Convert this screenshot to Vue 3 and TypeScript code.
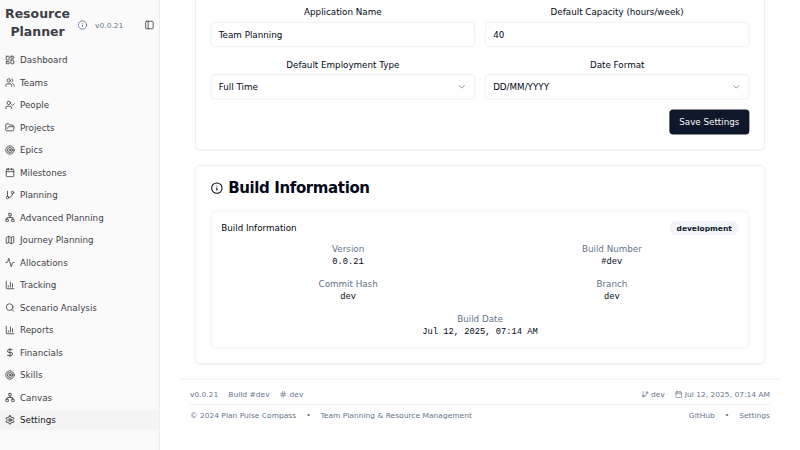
<script setup lang="ts">
import { defineComponent, h } from 'vue'

const icons: Record<string, string> = {
  dashboard: '<rect width="7" height="9" x="3" y="3" rx="1"/><rect width="7" height="5" x="14" y="3" rx="1"/><rect width="7" height="9" x="14" y="12" rx="1"/><rect width="7" height="5" x="3" y="16" rx="1"/>',
  users: '<path d="M16 21v-2a4 4 0 0 0-4-4H6a4 4 0 0 0-4 4v2"/><circle cx="9" cy="7" r="4"/><path d="M22 21v-2a4 4 0 0 0-3-3.87"/><path d="M16 3.13a4 4 0 0 1 0 7.75"/>',
  userCheck: '<path d="M16 21v-2a4 4 0 0 0-4-4H6a4 4 0 0 0-4 4v2"/><circle cx="9" cy="7" r="4"/><polyline points="16 11 18 13 22 9"/>',
  folder: '<path d="m6 14 1.5-2.9A2 2 0 0 1 9.24 10H20a2 2 0 0 1 1.94 2.5l-1.54 6a2 2 0 0 1-1.95 1.5H4a2 2 0 0 1-2-2V5a2 2 0 0 1 2-2h3.9a2 2 0 0 1 1.69.9l.81 1.2a2 2 0 0 0 1.67.9H18a2 2 0 0 1 2 2v2"/>',
  target: '<circle cx="12" cy="12" r="10"/><circle cx="12" cy="12" r="6"/><circle cx="12" cy="12" r="2"/>',
  calendar: '<path d="M8 2v4"/><path d="M16 2v4"/><rect width="18" height="18" x="3" y="4" rx="2"/><path d="M3 10h18"/>',
  branch: '<line x1="6" x2="6" y1="3" y2="15"/><circle cx="18" cy="6" r="3"/><circle cx="6" cy="18" r="3"/><path d="M18 9a9 9 0 0 1-9 9"/>',
  network: '<rect x="16" y="16" width="6" height="6" rx="1"/><rect x="2" y="16" width="6" height="6" rx="1"/><rect x="9" y="2" width="6" height="6" rx="1"/><path d="M5 16v-3a1 1 0 0 1 1-1h12a1 1 0 0 1 1 1v3"/><path d="M12 12V8"/>',
  map: '<path d="M14.106 5.553a2 2 0 0 0 1.788 0l3.659-1.83A1 1 0 0 1 21 4.619v12.764a1 1 0 0 1-.553.894l-4.553 2.277a2 2 0 0 1-1.788 0l-4.212-2.106a2 2 0 0 0-1.788 0l-3.659 1.83A1 1 0 0 1 3 19.381V6.618a1 1 0 0 1 .553-.894l4.553-2.277a2 2 0 0 1 1.788 0z"/><path d="M15 5.764v15"/><path d="M9 3.236v15"/>',
  activity: '<path d="M22 12h-2.48a2 2 0 0 0-1.93 1.46l-2.35 8.36a.25.25 0 0 1-.48 0L9.24 2.18a.25.25 0 0 0-.48 0l-2.35 8.36A2 2 0 0 1 4.49 12H2"/>',
  chart: '<path d="M3 3v16a2 2 0 0 0 2 2h16"/><path d="M18 17V9"/><path d="M13 17V5"/><path d="M8 17v-3"/>',
  search: '<circle cx="11" cy="11" r="8"/><path d="m21 21-4.3-4.3"/>',
  dollar: '<line x1="12" x2="12" y1="2" y2="22"/><path d="M17 5H9.5a3.5 3.5 0 0 0 0 7h5a3.5 3.5 0 0 1 0 7H6"/>',
  settings: '<path d="M12.22 2h-.44a2 2 0 0 0-2 2v.18a2 2 0 0 1-1 1.73l-.43.25a2 2 0 0 1-2 0l-.15-.08a2 2 0 0 0-2.73.73l-.22.38a2 2 0 0 0 .73 2.73l.15.1a2 2 0 0 1 1 1.72v.51a2 2 0 0 1-1 1.74l-.15.09a2 2 0 0 0-.73 2.73l.22.38a2 2 0 0 0 2.73.73l.15-.08a2 2 0 0 1 2 0l.43.25a2 2 0 0 1 1 1.73V20a2 2 0 0 0 2 2h.44a2 2 0 0 0 2-2v-.18a2 2 0 0 1 1-1.73l.43-.25a2 2 0 0 1 2 0l.15.08a2 2 0 0 0 2.73-.73l.22-.39a2 2 0 0 0-.73-2.73l-.15-.08a2 2 0 0 1-1-1.74v-.5a2 2 0 0 1 1-1.74l.15-.09a2 2 0 0 0 .73-2.73l-.22-.38a2 2 0 0 0-2.73-.73l-.15.08a2 2 0 0 1-2 0l-.43-.25a2 2 0 0 1-1-1.73V4a2 2 0 0 0-2-2z"/><circle cx="12" cy="12" r="3"/>',
  info: '<circle cx="12" cy="12" r="10"/><path d="M12 16v-4"/><path d="M12 8h.01"/>',
  panel: '<rect width="18" height="18" x="3" y="3" rx="2"/><path d="M9 3v18"/>',
  chevron: '<path d="m6 9 6 6 6-6"/>',
  hash: '<line x1="4" x2="20" y1="9" y2="9"/><line x1="4" x2="20" y1="15" y2="15"/><line x1="10" x2="8" y1="3" y2="21"/><line x1="16" x2="14" y1="3" y2="21"/>',
}

const Icon = defineComponent({
  props: { name: { type: String, required: true } },
  setup(props) {
    return () =>
      h('svg', {
        class: 'icon',
        viewBox: '0 0 24 24',
        fill: 'none',
        stroke: 'currentColor',
        'stroke-width': 2,
        'stroke-linecap': 'round',
        'stroke-linejoin': 'round',
        innerHTML: icons[props.name],
      })
  },
})

interface NavItem {
  label: string
  icon: string
  active?: boolean
}

const nav: NavItem[] = [
  { label: 'Dashboard', icon: 'dashboard' },
  { label: 'Teams', icon: 'users' },
  { label: 'People', icon: 'userCheck' },
  { label: 'Projects', icon: 'folder' },
  { label: 'Epics', icon: 'target' },
  { label: 'Milestones', icon: 'calendar' },
  { label: 'Planning', icon: 'branch' },
  { label: 'Advanced Planning', icon: 'network' },
  { label: 'Journey Planning', icon: 'map' },
  { label: 'Allocations', icon: 'activity' },
  { label: 'Tracking', icon: 'chart' },
  { label: 'Scenario Analysis', icon: 'search' },
  { label: 'Reports', icon: 'chart' },
  { label: 'Financials', icon: 'dollar' },
  { label: 'Skills', icon: 'target' },
  { label: 'Canvas', icon: 'network' },
  { label: 'Settings', icon: 'settings', active: true },
]

const fields = [
  { label: 'Application Name', value: 'Team Planning', select: false },
  { label: 'Default Capacity (hours/week)', value: '40', select: false },
  { label: 'Default Employment Type', value: 'Full Time', select: true },
  { label: 'Date Format', value: 'DD/MM/YYYY', select: true },
]

const build = [
  { label: 'Version', value: '0.0.21' },
  { label: 'Build Number', value: '#dev' },
  { label: 'Commit Hash', value: 'dev' },
  { label: 'Branch', value: 'dev' },
  { label: 'Build Date', value: 'Jul 12, 2025, 07:14 AM', wide: true },
]
</script>

<template>
  <div class="viewport">
    <div class="app">
      <aside class="sidebar">
        <header class="brand">
          <h2>Resource<br />Planner</h2>
          <Icon name="info" class="muted" />
          <span class="version">v0.0.21</span>
          <button class="toggle"><Icon name="panel" /></button>
        </header>
        <nav>
          <a v-for="item in nav" :key="item.label" :class="{ active: item.active }">
            <Icon :name="item.icon" />
            <span>{{ item.label }}</span>
          </a>
        </nav>
      </aside>

      <main>
        <section class="card settings">
          <div class="form">
            <div v-for="f in fields" :key="f.label" class="field">
              <label>{{ f.label }}</label>
              <div class="control">
                <span>{{ f.value }}</span>
                <Icon v-if="f.select" name="chevron" class="chevron" />
              </div>
            </div>
          </div>
          <button class="save">Save Settings</button>
        </section>

        <section class="card info">
          <h3><Icon name="info" /><span>Build Information</span></h3>
          <div class="build">
            <div class="build-head">
              <span>Build Information</span>
              <span class="badge">development</span>
            </div>
            <dl>
              <div v-for="b in build" :key="b.label" :class="{ wide: b.wide }">
                <dt>{{ b.label }}</dt>
                <dd>{{ b.value }}</dd>
              </div>
            </dl>
          </div>
        </section>

        <footer>
          <div class="row">
            <div class="group">
              <span>v0.0.21</span>
              <span>Build #dev</span>
              <span class="with-icon"><Icon name="hash" />dev</span>
            </div>
            <div class="group">
              <span class="with-icon"><Icon name="branch" />dev</span>
              <span class="with-icon"><Icon name="calendar" />Jul 12, 2025, 07:14 AM</span>
            </div>
          </div>
          <div class="row legal">
            <div class="group">
              <span>© 2024 Plan Pulse Compass</span><span>•</span><span>Team Planning &amp; Resource Management</span>
            </div>
            <div class="group"><span>GitHub</span><span>•</span><span>Settings</span></div>
          </div>
        </footer>
      </main>
    </div>
  </div>
</template>

<style>
body {
  margin: 0;
  background: #fff;
}
</style>

<style scoped>
* {
  box-sizing: border-box;
  margin: 0;
}
.viewport {
  width: 100vw;
  height: 100vh;
  overflow: hidden;
}
/* Laid out on a 1280px wide canvas and shown at 62.5% */
.app {
  display: flex;
  width: 160vw;
  height: 160vh;
  margin-bottom: -60vh;
  overflow: hidden;
  transform: scale(0.625);
  transform-origin: 0 0;
  background: #fff;
  color: #020817;
  font-family: 'DejaVu Sans', sans-serif;
  font-size: 14px;
  line-height: 20px;
}
button {
  font: inherit;
  border: 0;
}
.icon {
  width: 16px;
  height: 16px;
  flex: none;
  display: block;
}
.sidebar {
  width: 256px;
  flex: none;
  background: #fafafa;
  border-right: 1px solid #e2e4ee;
  color: #3f3f46;
}
.brand {
  display: flex;
  align-items: center;
  height: 80px;
  padding: 0 8px 8px;
}
.brand h2 {
  font-size: 20px;
  line-height: 28px;
  font-weight: 700;
  text-align: center;
  margin-right: 12px;
}
.brand .icon,
.version {
  position: relative;
  top: 4px;
}
.muted {
  color: #64748b;
}
.version {
  margin-left: 12px;
  font-size: 12px;
  color: #64748b;
}
.toggle {
  margin-left: auto;
  padding: 0;
  background: none;
  color: inherit;
}
nav {
  display: flex;
  flex-direction: column;
  gap: 4px;
}
nav a {
  display: flex;
  align-items: center;
  gap: 8px;
  height: 32px;
  padding: 0 8px;
  border-radius: 6px;
}
nav a.active {
  background: #f4f4f5;
  color: #18181b;
}
main {
  flex: 1;
  min-width: 0;
  padding: 0 32px;
}
.card {
  margin: 0 24px;
  padding: 24px;
  border: 1px solid #e2e8f0;
  border-radius: 8px;
  box-shadow: 0 1px 2px rgba(0, 0, 0, 0.05);
}
.settings {
  height: 240px;
  padding-top: 7px;
  border-top: 0;
  border-radius: 0 0 8px 8px;
  display: flex;
  flex-direction: column;
}
.form {
  display: grid;
  grid-template-columns: 1fr 1fr;
  gap: 16px;
}
.field {
  display: flex;
  flex-direction: column;
  gap: 4px;
}
label {
  text-align: center;
  line-height: 24px;
}
.control {
  display: flex;
  align-items: center;
  justify-content: space-between;
  height: 40px;
  padding: 0 12px;
  border: 1px solid #e2e8f0;
  border-radius: 6px;
}
.chevron {
  opacity: 0.5;
}
.save {
  align-self: flex-end;
  margin-top: 16px;
  height: 40px;
  flex: none;
  padding: 0 16px;
  border-radius: 6px;
  background: #0f172a;
  color: #f8fafc;
}
.info {
  margin-top: 24px;
  height: 318px;
}
h3 {
  display: flex;
  align-items: center;
  gap: 8px;
  height: 24px;
  font-size: 24px;
  line-height: 24px;
  letter-spacing: -0.025em;
}
h3 .icon {
  width: 20px;
  height: 20px;
}
.build {
  margin-top: 24px;
  height: 220px;
  padding: 16px;
  border: 1px solid #e2e8f0;
  border-radius: 8px;
}
.build-head {
  display: flex;
  align-items: center;
  justify-content: space-between;
  height: 22px;
}
.badge {
  height: 22px;
  padding: 0 11px;
  border-radius: 11px;
  background: #f1f5f9;
  color: #0f172a;
  font-size: 12px;
  line-height: 22px;
  font-weight: 700;
}
dl {
  display: grid;
  grid-template-columns: 1fr 1fr;
  gap: 16px;
  margin-top: 12px;
  text-align: center;
}
.wide {
  grid-column: span 2;
}
dt {
  color: #64748b;
}
dd {
  font-family: 'Liberation Mono', monospace;
}
footer {
  margin-top: 24px;
  padding: 16px 16px 0;
  border-top: 1px solid #e2e8f0;
  color: #64748b;
  font-size: 12px;
  line-height: 16px;
}
.row,
.group,
.with-icon {
  display: flex;
  align-items: center;
}
.row {
  justify-content: space-between;
}
.group {
  gap: 16px;
}
.with-icon {
  gap: 4px;
}
.with-icon .icon {
  width: 12px;
  height: 12px;
}
.legal {
  margin-top: 8px;
  padding-top: 8px;
  border-top: 1px solid #e2e8f0;
}
</style>
